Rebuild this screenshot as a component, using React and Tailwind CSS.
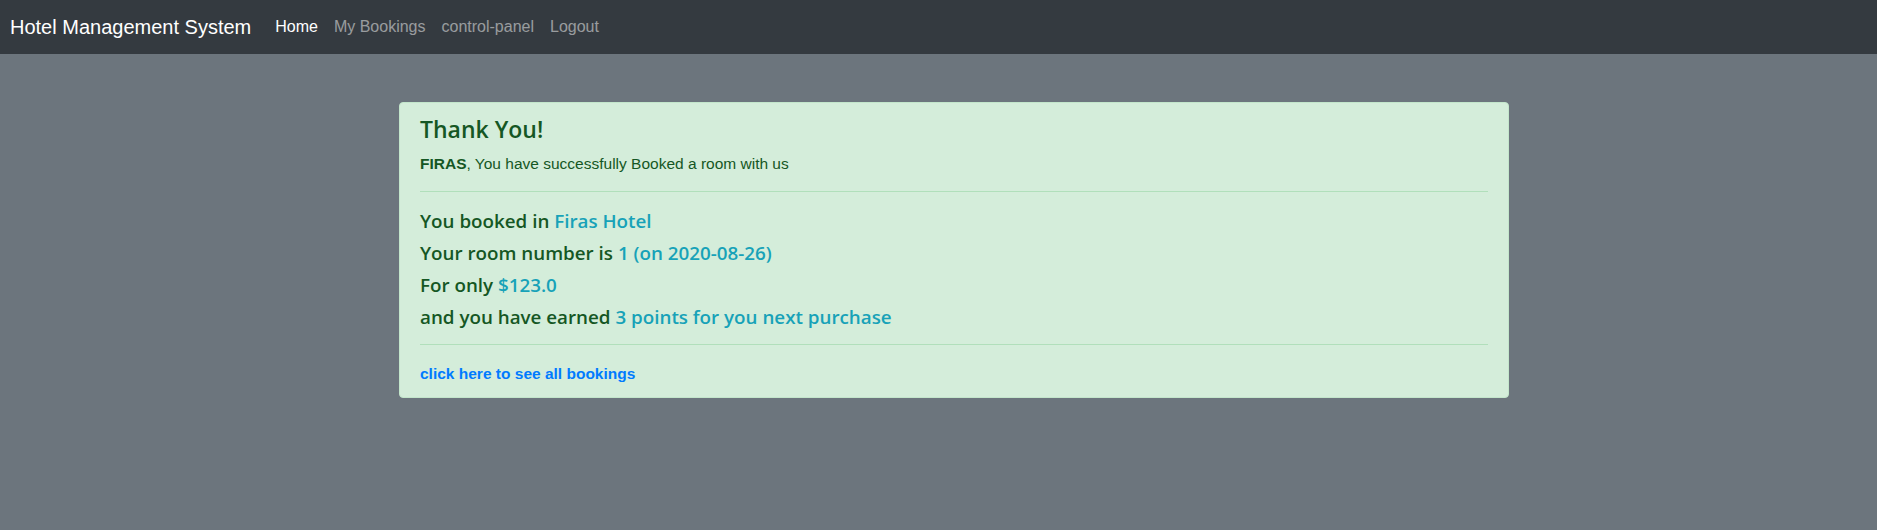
export default function App() {
  return (
    <div className="min-h-[530px] bg-[#6c757d] font-['Liberation_Sans',Arial,sans-serif]">
      {/* navbar */}
      <nav className="h-[54px] bg-[#343a40] flex items-center pl-[10px]">
        <a className="text-white text-[20px] leading-[30px] mr-[16px]">
          Hotel Management System
        </a>
        <ul className="flex items-center text-[16px] leading-[24px]">
          <li className="px-[8px] text-white">Home</li>
          <li className="px-[8px] text-white/50">My Bookings</li>
          <li className="px-[8px] text-white/50">control-panel</li>
          <li className="px-[8px] text-white/50">Logout</li>
        </ul>
      </nav>

      {/* booking confirmation */}
      <div className="pt-[48px] pl-[399px]">
        <div className="w-[1110px] bg-[#d4edda] border border-[#c3e6cb] rounded-[4px] px-[20px] pt-[12px] pb-[11px] text-[#155724]">
          <h4 className="font-['Open_Sans',sans-serif] text-[23px] leading-[29px] font-semibold mb-[8px]">
            Thank You!
          </h4>
          <p className="text-[15.5px] leading-[24px]">
            <b>FIRAS</b>, You have successfully Booked a room with us
          </p>
          <hr className="mt-[15px] mb-[17px] border-0 border-t border-[#b1dfbb]" />
          <div className="flex flex-col gap-[8px] font-['Open_Sans',sans-serif] text-[18.8px] leading-[24px] font-semibold">
            <h5>
              You booked in <span className="text-[#17a2b8]">Firas Hotel</span>
            </h5>
            <h5>
              Your room number is <span className="text-[#17a2b8]">1 (on 2020-08-26)</span>
            </h5>
            <h5>
              For only <span className="text-[#17a2b8]">$123.0</span>
            </h5>
            <h5>
              and you have earned{" "}
              <span className="text-[#17a2b8]">3 points for you next purchase</span>
            </h5>
          </div>
          <hr className="mt-[15px] mb-[17px] border-0 border-t border-[#b1dfbb]" />
          <p className="text-[15.5px] leading-[24px]">
            <a className="text-[#007bff] font-bold">click here to see all bookings</a>
          </p>
        </div>
      </div>
    </div>
  );
}
